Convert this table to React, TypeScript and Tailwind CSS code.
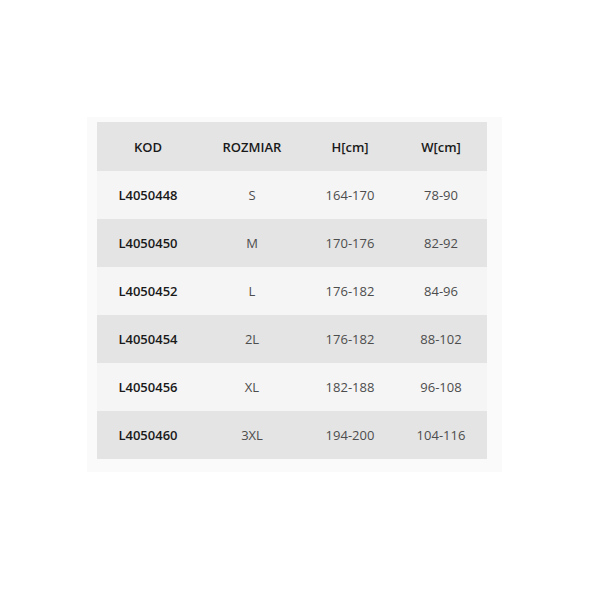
const rows = [
  { kod: "L4050448", size: "S", h: "164-170", w: "78-90" },
  { kod: "L4050450", size: "M", h: "170-176", w: "82-92" },
  { kod: "L4050452", size: "L", h: "176-182", w: "84-96" },
  { kod: "L4050454", size: "2L", h: "176-182", w: "88-102" },
  { kod: "L4050456", size: "XL", h: "182-188", w: "96-108" },
  { kod: "L4050460", size: "3XL", h: "194-200", w: "104-116" },
];

export default function App() {
  return (
    <div className="w-[590px] h-[590px] bg-white pt-[117px] pl-[87px] font-['Open_Sans',sans-serif]">
      <div className="w-[415px] h-[355px] bg-[#fafafa] pt-[5px] pl-[10px]">
        <table className="w-[390px] border-collapse table-fixed text-[13px] text-center">
          <colgroup>
            <col className="w-[102px]" />
            <col className="w-[106px]" />
            <col className="w-[90px]" />
            <col className="w-[92px]" />
          </colgroup>
          <thead>
            <tr className="h-[49px] bg-[#e4e4e4] text-[#1a1a1a]">
              <th className="font-semibold pt-[2px]">KOD</th>
              <th className="font-semibold pt-[2px]">ROZMIAR</th>
              <th className="font-semibold pt-[2px]">H[cm]</th>
              <th className="font-semibold pt-[2px]">W[cm]</th>
            </tr>
          </thead>
          <tbody>
            {rows.map((r, i) => (
              <tr
                key={r.kod}
                className={`h-[48px] ${i % 2 === 0 ? "bg-[#f5f5f5]" : "bg-[#e4e4e4]"}`}
              >
                <td className="font-semibold text-[#1a1a1a] pt-[2px]">{r.kod}</td>
                <td className="font-medium text-[#4d4d4d] pt-[2px]">{r.size}</td>
                <td className="font-medium text-[#4d4d4d] pt-[2px]">{r.h}</td>
                <td className="font-medium text-[#4d4d4d] pt-[2px]">{r.w}</td>
              </tr>
            ))}
          </tbody>
        </table>
      </div>
    </div>
  );
}
